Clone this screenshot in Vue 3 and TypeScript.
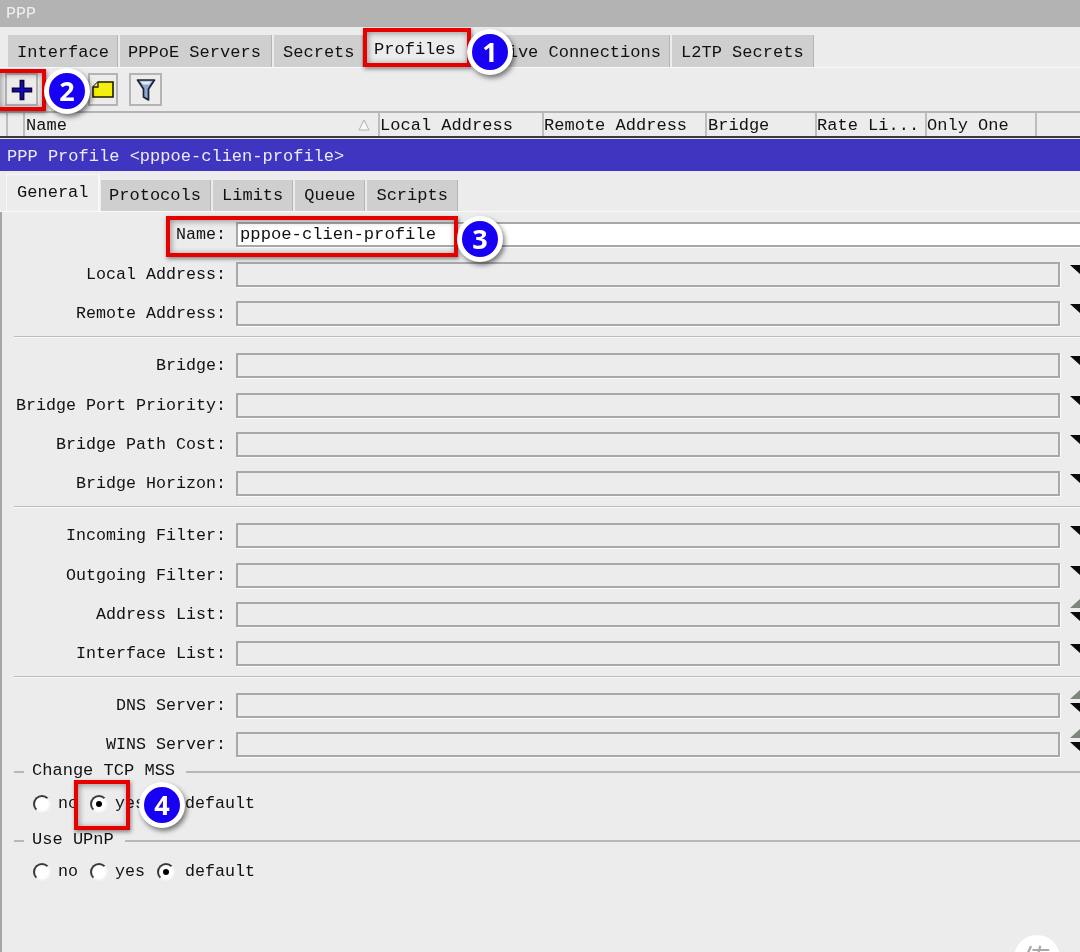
<script setup lang="ts">
interface Tab { label: string; active?: boolean }
const mainTabs: Tab[] = [
  { label: 'Interface' },
  { label: 'PPPoE Servers' },
  { label: 'Secrets' },
  { label: 'Profiles', active: true },
  { label: 'Active Connections' },
  { label: 'L2TP Secrets' },
]
const subTabs: Tab[] = [
  { label: 'General', active: true },
  { label: 'Protocols' },
  { label: 'Limits' },
  { label: 'Queue' },
  { label: 'Scripts' },
]
const columns = [
  { label: '', w: 17 },
  { label: 'Name', w: 355, sort: true },
  { label: 'Local Address', w: 164 },
  { label: 'Remote Address', w: 163 },
  { label: 'Bridge', w: 110 },
  { label: 'Rate Li...', w: 110 },
  { label: 'Only One', w: 110 },
  { label: '', w: 45 },
]
interface Row { label: string; updown?: boolean }
const groups: Row[][] = [
  [{ label: 'Local Address' }, { label: 'Remote Address' }],
  [{ label: 'Bridge' }, { label: 'Bridge Port Priority' }, { label: 'Bridge Path Cost' }, { label: 'Bridge Horizon' }],
  [{ label: 'Incoming Filter' }, { label: 'Outgoing Filter' }, { label: 'Address List', updown: true }, { label: 'Interface List' }],
  [{ label: 'DNS Server', updown: true }, { label: 'WINS Server', updown: true }],
]
const radioGroups = [
  { legend: 'Change TCP MSS', selected: 'yes' },
  { legend: 'Use UPnP', selected: 'default' },
]
const options = ['no', 'yes', 'default']
const marks = ['1', '2', '3', '4']
</script>

<template>
  <div class="app">
    <div class="title">PPP</div>
    <div class="tabs main-tabs">
      <div v-for="t in mainTabs" :key="t.label" class="tab" :class="{ active: t.active }">{{ t.label }}</div>
    </div>
    <div class="toolbar">
      <div class="tool plus">
        <svg width="22" height="22" viewBox="0 0 22 22"><path d="M9.300 1.500h3.400v7.800h7.800v3.400h-7.800v7.800H9.300v-7.800H1.500V9.300h7.800z" fill="#1400f0" stroke="#0b0b20" stroke-width="1.500"/></svg>
      </div>
      <div class="tool note">
        <svg width="22" height="17" viewBox="0 0 22 17"><path d="M6 1h15v15H1V6z" fill="#f4f000" stroke="#1c1c00" stroke-width="1.600"/><path d="M6 1v5H1" fill="#e8e8a0" stroke="#1c1c00" stroke-width="1.300"/><path d="M10 6h7M10 10h7" stroke="#e9e98a" stroke-width="1.200" stroke-dasharray="2 1"/></svg>
      </div>
      <div class="tool filter">
        <svg width="20" height="24" viewBox="0 0 20 24"><path d="M1.500 2h17l-6 9v11l-5-3v-8z" fill="#8fa8d0" stroke="#1d2230" stroke-width="1.700" stroke-linejoin="round"/><path d="M4.500 3.500h11l-2.500 3H7z" fill="#e4ecf6"/></svg>
      </div>
    </div>
    <div class="thead">
      <div v-for="(c, i) in columns" :key="i" class="th" :style="{ width: c.w + 'px' }">
        {{ c.label }}
        <svg v-if="c.sort" class="sort" width="12" height="12" viewBox="0 0 12 12"><path d="M6 1L1 11h10z" fill="#f8f8f8" stroke="#b0b0b0" stroke-width="1"/></svg>
      </div>
    </div>
    <div class="window-title">PPP Profile &lt;pppoe-clien-profile&gt;</div>
    <div class="tabs sub-tabs">
      <div v-for="t in subTabs" :key="t.label" class="tab" :class="{ active: t.active }">{{ t.label }}</div>
    </div>
    <div class="form">
      <div class="row name-row">
        <div class="label">Name:</div>
        <div class="field name-field">pppoe-clien-profile</div>
      </div>
      <div v-for="(g, gi) in groups" :key="gi" class="group" :class="{ first: gi === 0 }">
        <div v-for="r in g" :key="r.label" class="row">
          <div class="label">{{ r.label }}:</div>
          <div class="field"></div>
          <div class="arrows" :class="{ updown: r.updown }">
            <span v-if="r.updown" class="up"></span>
            <span class="down"></span>
          </div>
        </div>
      </div>
      <div v-for="rg in radioGroups" :key="rg.legend" class="fieldset">
        <div class="legend"><span>{{ rg.legend }}</span></div>
        <div class="radios">
          <div v-for="o in options" :key="o" class="radio-item">
            <span class="radio" :class="{ on: rg.selected === o }"></span>{{ o }}
          </div>
        </div>
      </div>
    </div>

    <div class="box box1"></div>
    <div class="box box2"></div>
    <div class="box box3"></div>
    <div class="box box4"></div>
    <div v-for="m in marks" :key="m" class="mark" :class="'mark' + m">{{ m }}</div>
    <div class="watermark">传</div>
  </div>
</template>

<style>
html, body { margin: 0; background: #ececec; }
</style>

<style scoped>
.app {
  position: relative;
  width: 1080px;
  height: 952px;
  overflow: hidden;
  background: #ececec;
  color: #111;
  font-family: "Liberation Mono", "DejaVu Sans Mono", monospace;
  font-size: 17.05px;
  filter: blur(0.35px);
}
.title {
  height: 27px;
  line-height: 27px;
  padding-left: 6px;
  background: #b3b3b3;
  color: #f0f0f0;
  font-size: 16.67px;
}
.tabs { display: flex; gap: 2px; box-sizing: border-box; }
.main-tabs {
  height: 41px;
  padding: 8px 0 0 8px;
  border-bottom: 1px solid #fafafa;
}
.tab {
  padding: 0 9px;
  height: 32px;
  line-height: 35px;
  background: #cfcfcf;
  border-right: 1px solid #b5b5b5;
  white-space: pre;
}
.main-tabs .tab { box-sizing: border-box; flex: none; }
.main-tabs .tab:nth-child(1) { width: 110px; }
.main-tabs .tab:nth-child(2) { width: 152px; padding-left: 8px; }
.main-tabs .tab:nth-child(3) { width: 89px; }
.main-tabs .tab:nth-child(4) { width: 105px; }
.main-tabs .tab:nth-child(5) { width: 198px; padding-left: 5px; }
.main-tabs .tab:nth-child(6) { width: 142px; }
.main-tabs .tab.active {
  margin-top: -6px;
  height: 38px;
  line-height: 41px;
  background: #ececec;
}
.toolbar {
  height: 43px;
  box-sizing: border-box;
  position: relative;
}
.tool {
  position: absolute;
  top: 5px;
  height: 33px;
  box-sizing: border-box;
  border: 2px solid #b4b4b4;
  display: flex;
  align-items: center;
  justify-content: center;
}
.plus { left: 5px; width: 33px; }
.note { left: 88px; width: 30px; }
.filter { left: 129px; width: 33px; }
.thead {
  display: flex;
  padding-left: 6px;
  border-top: 2px solid #b4b4b4;
  box-sizing: border-box;
  border-bottom: 2px solid #3a3a3a;
  height: 27px;
  margin-bottom: 1px;
}
.th {
  position: relative;
  box-sizing: border-box;
  flex: none;
  padding-left: 0;
  line-height: 26px;
  border-left: 2px solid #bdbdbd;
  white-space: pre;
}
.th:nth-child(2) { padding-left: 1px; }
.th:nth-child(5) { padding-left: 1px; }
.sort { position: absolute; right: 8px; top: 6px; }
.window-title {
  height: 32px;
  line-height: 35px;
  padding-left: 7px;
  background: #4035c1;
  color: #ececf8;
}
.sub-tabs {
  height: 41px;
  padding: 4px 0 0 6px;
  border-bottom: 1px solid #fafafa;
  align-items: flex-end;
}
.sub-tabs .tab { height: 31px; line-height: 31px; }
.sub-tabs .tab:nth-child(2) { padding-left: 8px; padding-right: 9px; margin-left: -1px; }
.sub-tabs .tab.active {
  height: 37px;
  width: 94px;
  box-sizing: border-box;
  padding-left: 10px;
  line-height: 35px;
  background: #ececec;
  border-right: 2px solid #f8f8f8;
  border-left: 1px solid #f8f8f8;
  border-top: 1px solid #f8f8f8;
}
.form {
  height: 741px;
  box-sizing: border-box;
  padding-top: 10px;
  border-left: 2px solid #a6a6a6;
}
.row {
  display: flex;
  align-items: stretch;
  height: 25px;
  gap: 10px;
  font-size: 16.67px;
}
.label {
  width: 224px;
  flex: none;
  text-align: right;
  line-height: 26px;
  white-space: pre;
}
.field {
  flex: 1;
  box-sizing: border-box;
  border: 2px solid #a8a8a8;
  box-shadow: 1px 1px 0 #fbfbfb;
  line-height: 22px;
  padding-left: 2px;
  background: #ececec;
}
.name-row { margin-right: -3px; }
.name-field { background: #fff; border-right: none; font-size: 17.2px; }
.group {
  display: flex;
  flex-direction: column;
  gap: 14.330px;
  padding-top: 16.300px;
  margin-top: 9.670px;
  margin-left: 12px;
  border-top: 1px solid #bdbdbd;
  box-shadow: inset 0 1px 0 #f8f8f8;
}
.group .label { width: 212px; }
.group.first { margin-top: 15px; padding-top: 0; border-top: none; box-shadow: none; }
.arrows {
  width: 10px;
  flex: none;
  position: relative;
}
.arrows span { position: absolute; left: 0; width: 0; height: 0; border-left: 11px solid transparent; border-right: 11px solid transparent; }
.down { top: 3px; border-top: 10px solid #0a0a0a; }
.up { top: -4px; border-bottom: 10px solid #7d857d; }
.updown .down { top: 10px; }
.fieldset { margin-left: 12px; }
.legend {
  position: relative;
  height: 20px;
  line-height: 20px;
  padding-left: 18px;
  margin-top: 4px;
  display: flex;
  align-items: center;
  gap: 11px;
}
.legend::before { content: ""; position: absolute; left: 0; top: 10px; width: 10px; height: 2px; background: #b8b8b8; }
.legend::after { content: ""; flex: 1; height: 2px; margin-top: 2px; background: #b8b8b8; }
.radios {
  display: flex;
  height: 20px;
  margin-top: 13px;
  margin-bottom: 26px;
  padding-left: 19px;
  gap: 12px;
  line-height: 20px;
  font-size: 16.67px;
}
.fieldset + .fieldset .legend { margin-top: -10px; }
.fieldset + .fieldset .radios { margin-top: 12px; }
.radio-item { display: flex; align-items: center; gap: 7px; white-space: pre; }
.radio-item:last-child { gap: 10px; }
.radio {
  width: 18px;
  height: 18px;
  border-radius: 50%;
  box-sizing: border-box;
  background: #fff;
  border: 2px solid;
  border-color: #3a3a3a #f4f4f4 #f4f4f4 #3a3a3a;
  display: flex;
  align-items: center;
  justify-content: center;
}
.radio.on::after { content: ""; width: 6px; height: 6px; border-radius: 50%; background: #000; }
.box {
  position: absolute;
  box-sizing: border-box;
  border: 4px solid #e60000;
  box-shadow: 1px 2px 4px rgba(0,0,0,.45), inset 1px 1px 6px rgba(0,0,0,.4);
}
.box1 { left: 363px; top: 28px; width: 108px; height: 39px; }
.box2 { left: -4px; top: 69px; width: 50px; height: 42px; }
.box3 { left: 166px; top: 216px; width: 292px; height: 41px; }
.box4 { left: 74px; top: 780px; width: 56px; height: 50px; }
.mark {
  position: absolute;
  box-sizing: border-box;
  width: 46px;
  height: 46px;
  border-radius: 50%;
  border: 5px solid #fff;
  background: #1800f4;
  color: #fff;
  font-family: "Open Sans", "Liberation Sans", sans-serif;
  font-weight: 700;
  font-size: 27px;
  line-height: 35px;
  text-align: center;
  box-shadow: 2px 3px 5px rgba(0,0,0,.5);
}
.mark1 { left: 467px; top: 29px; }
.mark2 { left: 44px; top: 68px; }
.mark3 { left: 457px; top: 216px; }
.mark4 { left: 139px; top: 782px; }
.watermark {
  position: absolute;
  left: 1014px;
  top: 935px;
  width: 46px;
  height: 46px;
  border-radius: 50%;
  background: #fff;
  color: #aaa;
  font-family: "Noto Sans CJK SC", sans-serif;
  font-size: 30px;
  line-height: 46px;
  text-align: center;
}
</style>
